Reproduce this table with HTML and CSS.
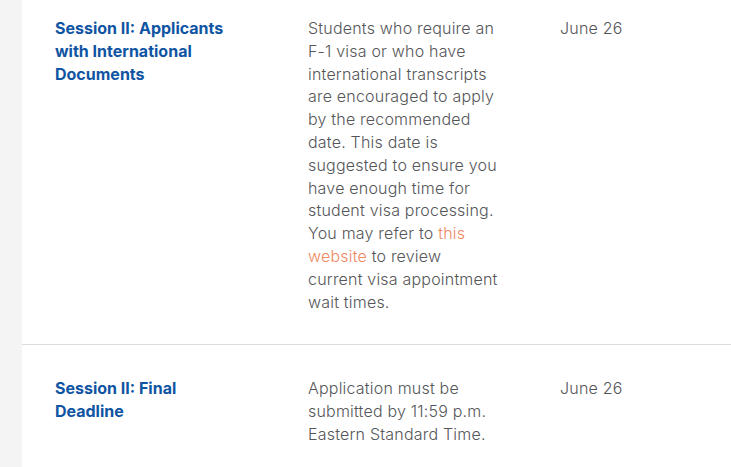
FILE: index.html
```html
<!DOCTYPE html>
<html lang="en">
<head>
<meta charset="utf-8">
<title>Deadlines</title>
<link rel="stylesheet" href="styles.css">
</head>
<body>
<main class="panel">
  <div class="row first">
    <h3 class="title">Session II: Applicants with International Documents</h3>
    <p class="desc">Students who require an F-1 visa or who have international transcripts are encouraged to apply by the recommended date. This date is suggested to ensure you have enough time for student visa processing. You may refer to <a href="#" class="link">this website</a> to review current visa appointment wait times.</p>
    <p class="date">June 26</p>
  </div>
  <div class="row">
    <h3 class="title">Session II: Final Deadline</h3>
    <p class="desc">Application must be submitted by 11:59 p.m. Eastern Standard Time.</p>
    <p class="date">June 26</p>
  </div>
</main>
</body>
</html>
```
FILE: styles.css
```css
html, body {
  margin: 0;
  padding: 0;
  height: 100%;
}
body {
  background: #f4f4f4;
  overflow: hidden;
}
.panel {
  margin-left: 22px;
  background: #ffffff;
  min-height: 100%;
}
.row {
  display: grid;
  grid-template-columns: 253px 252px 1fr;
  padding: 32px 0 31px 33px;
  border-bottom: 1px solid #dcdcdc;
  align-items: start;
}
.row.first {
  padding-top: 17px;
}
.title {
  margin: 0;
  max-width: 180px;
  font-family: Inter, "Liberation Sans", sans-serif;
  font-weight: 700;
  font-size: 16px;
  line-height: 23px;
  color: #0f55a3;
}
.desc, .date {
  margin: 0;
  font-family: Inter, "Liberation Sans", sans-serif;
  font-weight: 300;
  font-size: 16px;
  line-height: 22.8px;
  letter-spacing: 0.2px;
  color: #555659;
}
.desc {
  max-width: 192px;
}
.link {
  color: #f2875f;
  text-decoration: none;
}
```
